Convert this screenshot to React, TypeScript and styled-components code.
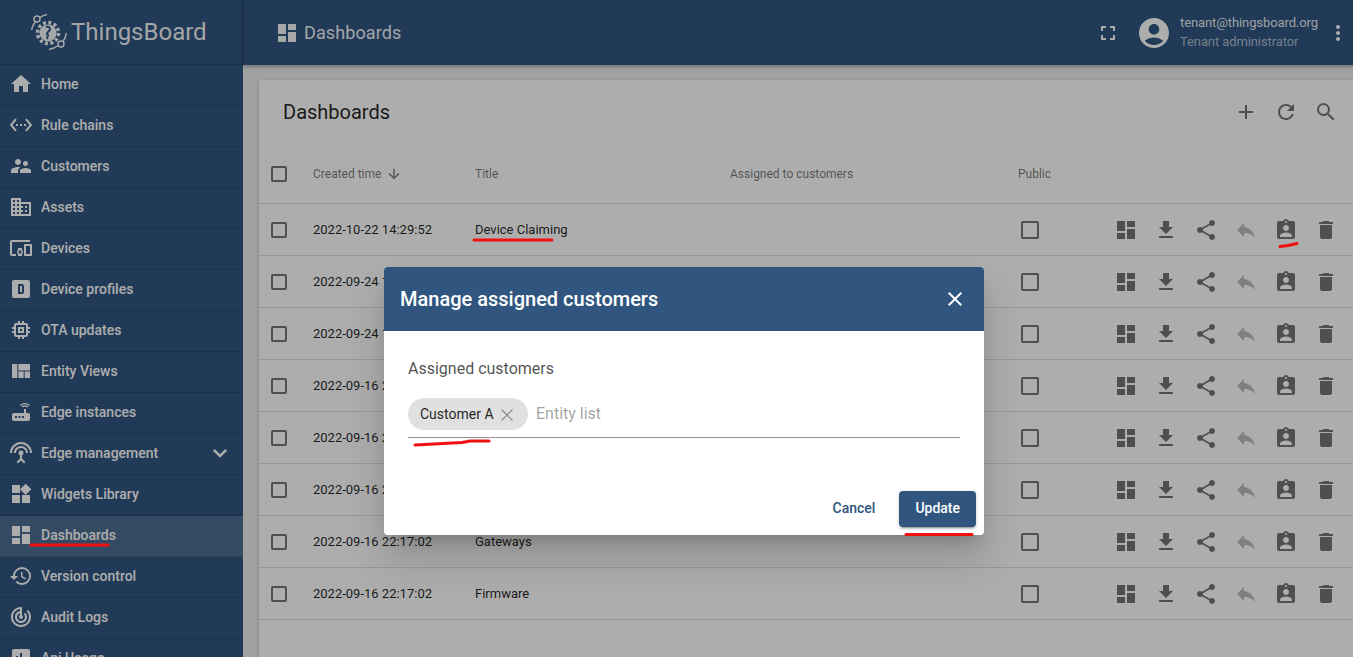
import React from "react";
import styled, { createGlobalStyle } from "styled-components";
import {
  MdAccountCircle,
  MdAdd,
  MdArrowDownward,
  MdAssignmentInd,
  MdClose,
  MdDashboard,
  MdDelete,
  MdDevicesOther,
  MdDomain,
  MdExpandMore,
  MdFileDownload,
  MdFullscreen,
  MdHistory,
  MdHome,
  MdInsertChart,
  MdMemory,
  MdMoreVert,
  MdRefresh,
  MdReply,
  MdRouter,
  MdSearch,
  MdSettingsEthernet,
  MdSettingsInputAntenna,
  MdShare,
  MdSupervisorAccount,
  MdTrackChanges,
  MdViewQuilt,
  MdWidgets,
} from "react-icons/md";

const GlobalStyle = createGlobalStyle`
  html, body {
    margin: 0;
    height: 100%;
    overflow: hidden;
    font-family: Roboto, "Liberation Sans", sans-serif;
  }
  * { box-sizing: border-box; }
`;

const Page = styled.div`
  position: relative;
  width: 1368px;
  height: 657px;
  overflow: hidden;
  display: grid;
  grid-template-columns: 243px 1fr;
  background: #eeeeee;
`;

const Sidebar = styled.aside`
  background: #305680;
  color: #fff;
  overflow: hidden;
  height: 657px;
`;

const Logo = styled.div`
  height: 65px;
  padding-left: 28px;
  display: flex;
  align-items: center;
  gap: 3px;
  border-bottom: 1px solid rgba(0, 0, 0, 0.12);
  font-size: 24px;
  color: rgba(255, 255, 255, 0.95);
`;

const MenuRow = styled.div<{ $active?: boolean }>`
  height: 41px;
  flex: none;
  padding: 0 9px 2px 9px;
  display: flex;
  align-items: center;
  gap: 8px;
  font-size: 14px;
  font-weight: 500;
  border-bottom: 1px solid rgba(0, 0, 0, 0.12);
  background: ${(p) => (p.$active ? "rgba(255, 255, 255, 0.15)" : "transparent")};
  svg { flex: none; }
`;

const Chevron = styled(MdExpandMore)`
  margin-left: auto;
`;

const Main = styled.main`
  display: flex;
  flex-direction: column;
  min-width: 0;
`;

const TopBar = styled.header`
  height: 65px;
  flex: none;
  background: #305680;
  color: #fff;
  display: flex;
  align-items: center;
  padding-left: 31px;
  border-left: 1px solid rgba(0, 0, 0, 0.12);
  box-shadow: 0 2px 4px rgba(0, 0, 0, 0.3);
  position: relative;
`;

const PageName = styled.div`
  display: flex;
  align-items: center;
  gap: 5px;
  font-size: 18px;
  letter-spacing: 0.1px;
  color: rgba(255, 255, 255, 0.95);
`;

const UserArea = styled.div`
  margin-left: auto;
  display: flex;
  align-items: center;
  padding-right: 18px;
`;

const Avatar = styled(MdAccountCircle)`
  margin-left: 16px;
`;

const UserText = styled.div`
  margin: 0 8px;
  width: 138px;
  white-space: nowrap;
  font-size: 13px;
  line-height: 19px;
  letter-spacing: -0.1px;
  color: rgba(255, 255, 255, 0.9);
  padding-bottom: 1px;
`;

const UserRole = styled.div`
  color: rgba(255, 255, 255, 0.6);
`;

const Content = styled.div`
  flex: 1;
  padding: 15px 0 0 16px;
  overflow: hidden;
`;

const Card = styled.section`
  height: 100%;
  background: #fff;
  box-shadow: 0 1px 3px rgba(0, 0, 0, 0.25);
`;

const Toolbar = styled.div`
  height: 64px;
  padding: 0 22px 0 24px;
  display: flex;
  align-items: center;
  justify-content: space-between;
  font-size: 20px;
  color: rgba(0, 0, 0, 0.87);
`;

const IconGroup = styled.div`
  display: flex;
`;

const IconButton = styled.span<{ $disabled?: boolean }>`
  width: 40px;
  height: 40px;
  display: flex;
  align-items: center;
  justify-content: center;
  color: ${(p) => (p.$disabled ? "rgba(0, 0, 0, 0.26)" : "rgba(0, 0, 0, 0.54)")};
`;

const Row = styled.div<{ $head?: boolean }>`
  height: ${(p) => (p.$head ? "60px" : "52px")};
  display: grid;
  grid-template-columns: 54px 162px 255px 288px 1fr;
  align-items: center;
  border-bottom: 1px solid rgba(0, 0, 0, 0.12);
  font-size: ${(p) => (p.$head ? "12px" : "13px")};
  color: ${(p) => (p.$head ? "rgba(0, 0, 0, 0.54)" : "rgba(0, 0, 0, 0.87)")};
`;

const CheckCell = styled.div`
  padding-left: 12px;
`;

const Checkbox = styled.div<{ $size?: number }>`
  width: ${(p) => p.$size ?? 16}px;
  height: ${(p) => p.$size ?? 16}px;
  border: 2px solid rgba(0, 0, 0, 0.54);
  border-radius: 2px;
`;

const PublicCell = styled.div`
  display: flex;
  align-items: center;
  justify-content: space-between;
  padding: 0 22px 0 3px;
`;

const SortCell = styled.div`
  display: flex;
  align-items: center;
  gap: 5px;
`;

const Overlay = styled.div`
  position: absolute;
  inset: 0;
  background: rgba(0, 0, 0, 0.32);
  display: flex;
  justify-content: center;
  align-items: flex-start;
  padding-top: 267px;
`;

const Dialog = styled.div`
  width: 600px;
  height: 268px;
  background: #fff;
  border-radius: 4px;
  overflow: hidden;
  display: flex;
  flex-direction: column;
  box-shadow: 0 11px 15px -7px rgba(0, 0, 0, 0.2), 0 24px 38px 3px rgba(0, 0, 0, 0.14);
`;

const DialogHead = styled.div`
  height: 64px;
  flex: none;
  background: #305680;
  color: #fff;
  display: flex;
  align-items: center;
  justify-content: space-between;
  padding: 0 17px 0 16px;
  font-size: 20px;
  font-weight: 500;
`;

const DialogBody = styled.div`
  flex: 1;
  padding: 28px 24px 0;
`;

const FieldLabel = styled.div`
  font-size: 16px;
  line-height: 20px;
  color: rgba(0, 0, 0, 0.7);
  margin-bottom: 19px;
`;

const ChipField = styled.div`
  height: 40px;
  display: flex;
  align-items: flex-start;
  gap: 8px;
  border-bottom: 1px solid rgba(0, 0, 0, 0.42);
`;

const Chip = styled.div`
  height: 32px;
  width: 120px;
  flex: none;
  border-radius: 16px;
  background: #e0e0e0;
  color: rgba(0, 0, 0, 0.87);
  font-size: 14px;
  display: flex;
  align-items: center;
  padding: 0 0 1px 12px;
  gap: 7px;
`;

const ChipRemove = styled.svg`
  color: rgba(0, 0, 0, 0.4);
  margin-top: 2px;
`;

const Placeholder = styled.div`
  font-size: 16px;
  line-height: 32px;
  color: rgba(0, 0, 0, 0.38);
`;

const DialogFooter = styled.div`
  flex: none;
  height: 52px;
  padding: 8px;
  display: flex;
  justify-content: flex-end;
  gap: 8px;
`;

const Button = styled.button<{ $primary?: boolean }>`
  height: 36px;
  padding: 0 16px 2px;
  border: none;
  border-radius: 4px;
  font-family: inherit;
  font-size: 14px;
  font-weight: 500;
  color: ${(p) => (p.$primary ? "#fff" : "#305680")};
  background: ${(p) => (p.$primary ? "#305680" : "transparent")};
  box-shadow: ${(p) =>
    p.$primary ? "0 3px 1px -2px rgba(0,0,0,.2), 0 2px 2px 0 rgba(0,0,0,.14), 0 1px 5px 0 rgba(0,0,0,.12)" : "none"};
`;

const Scribbles = styled.svg`
  position: absolute;
  top: 0;
  left: 0;
  pointer-events: none;
`;

const DeviceProfileIcon = () => (
  <svg width="24" height="24" viewBox="0 0 24 24" fill="currentColor">
    <path d="M9,7V17H13A2,2 0 0,0 15,15V9A2,2 0 0,0 13,7H9M11,9H13V15H11V9M5,3H19A2,2 0 0,1 21,5V19A2,2 0 0,1 19,21H5A2,2 0 0,1 3,19V5A2,2 0 0,1 5,3Z" />
  </svg>
);

const LogoMark = () => (
  <svg width="40" height="42" viewBox="0 0 40 42" fill="none" stroke="currentColor">
    <circle cx="20" cy="22" r="8.5" fill="currentColor" stroke="none" />
    <circle cx="20" cy="22" r="10.5" strokeWidth="3.5" strokeDasharray="3 2.5" />
    <path d="M18 16c4-1 5 2 3 4s-3 3-1 4l-1 4" stroke="#305680" strokeWidth="2" />
    <circle cx="9" cy="8" r="3" strokeWidth="1.5" />
    <path d="M12 6.5C14 5 16.5 4 19 3.5M7.5 10.5C5.5 13 4 16 3.5 19" strokeWidth="1.5" />
    <circle cx="33" cy="33" r="3" strokeWidth="1.5" />
    <path d="M30 34.5C27 37 24 38 21 38.5M35 30.5C37 28 38 25 38.3 22" strokeWidth="1.5" />
  </svg>
);

const menu: { label: string; icon: React.ReactNode; active?: boolean; expand?: boolean }[] = [
  { label: "Home", icon: <MdHome size={24} /> },
  { label: "Rule chains", icon: <MdSettingsEthernet size={24} /> },
  { label: "Customers", icon: <MdSupervisorAccount size={24} /> },
  { label: "Assets", icon: <MdDomain size={24} /> },
  { label: "Devices", icon: <MdDevicesOther size={24} /> },
  { label: "Device profiles", icon: <DeviceProfileIcon /> },
  { label: "OTA updates", icon: <MdMemory size={24} /> },
  { label: "Entity Views", icon: <MdViewQuilt size={24} /> },
  { label: "Edge instances", icon: <MdRouter size={24} /> },
  { label: "Edge management", icon: <MdSettingsInputAntenna size={24} />, expand: true },
  { label: "Widgets Library", icon: <MdWidgets size={24} /> },
  { label: "Dashboards", icon: <MdDashboard size={24} />, active: true },
  { label: "Version control", icon: <MdHistory size={24} /> },
  { label: "Audit Logs", icon: <MdTrackChanges size={24} /> },
  { label: "Api Usage", icon: <MdInsertChart size={24} /> },
];

const rows = [
  { time: "2022-10-22 14:29:52", title: "Device Claiming" },
  { time: "2022-09-24 17:40:11", title: "" },
  { time: "2022-09-24 17:39:48", title: "" },
  { time: "2022-09-16 22:17:02", title: "" },
  { time: "2022-09-16 22:17:02", title: "" },
  { time: "2022-09-16 22:17:02", title: "" },
  { time: "2022-09-16 22:17:02", title: "Gateways" },
  { time: "2022-09-16 22:17:02", title: "Firmware" },
];

export default function App() {
  return (
    <>
      <GlobalStyle />
      <Page>
        <Sidebar>
          <Logo>
            <LogoMark />
            ThingsBoard
          </Logo>
          {menu.map((m) => (
            <MenuRow key={m.label} $active={m.active}>
              {m.icon}
              {m.label}
              {m.expand && <Chevron size={28} />}
            </MenuRow>
          ))}
        </Sidebar>
        <Main>
          <TopBar>
            <PageName>
              <MdDashboard size={24} />
              Dashboards
            </PageName>
            <UserArea>
              <MdFullscreen size={24} />
              <Avatar size={36} />
              <UserText>
                tenant@thingsboard.org
                <UserRole>Tenant administrator</UserRole>
              </UserText>
              <MdMoreVert size={24} />
            </UserArea>
          </TopBar>
          <Content>
            <Card>
              <Toolbar>
                Dashboards
                <IconGroup>
                  <IconButton><MdAdd size={24} /></IconButton>
                  <IconButton><MdRefresh size={24} /></IconButton>
                  <IconButton><MdSearch size={24} /></IconButton>
                </IconGroup>
              </Toolbar>
              <Row $head>
                <CheckCell><Checkbox /></CheckCell>
                <SortCell>
                  Created time <MdArrowDownward size={16} />
                </SortCell>
                <div>Title</div>
                <div>Assigned to customers</div>
                <div>Public</div>
              </Row>
              {rows.map((r, i) => (
                <Row key={i}>
                  <CheckCell><Checkbox /></CheckCell>
                  <div>{r.time}</div>
                  <div>{r.title}</div>
                  <div />
                  <PublicCell>
                    <Checkbox $size={18} />
                    <IconGroup>
                      <IconButton><MdDashboard size={24} /></IconButton>
                      <IconButton><MdFileDownload size={24} /></IconButton>
                      <IconButton><MdShare size={24} /></IconButton>
                      <IconButton $disabled><MdReply size={24} /></IconButton>
                      <IconButton><MdAssignmentInd size={24} /></IconButton>
                      <IconButton><MdDelete size={24} /></IconButton>
                    </IconGroup>
                  </PublicCell>
                </Row>
              ))}
            </Card>
          </Content>
        </Main>
        <Overlay>
          <Dialog>
            <DialogHead>
              Manage assigned customers
              <MdClose size={24} />
            </DialogHead>
            <DialogBody>
              <FieldLabel>Assigned customers</FieldLabel>
              <ChipField>
                <Chip>
                  Customer A
                  <ChipRemove width="12" height="12" viewBox="0 0 12 12" stroke="currentColor" strokeWidth="1.1">
                    <path d="M.5.5l11 11M11.5.5l-11 11" />
                  </ChipRemove>
                </Chip>
                <Placeholder>Entity list</Placeholder>
              </ChipField>
            </DialogBody>
            <DialogFooter>
              <Button>Cancel</Button>
              <Button $primary>Update</Button>
            </DialogFooter>
          </Dialog>
        </Overlay>
        <Scribbles width="1368" height="657" fill="none" stroke="#f01010" strokeWidth="3" strokeLinecap="round">
          <path d="M31 545H108" />
          <path d="M474 240H552" />
          <path d="M1280 246.5L1288 245.5L1297 243.5" />
          <path d="M415 445L462 442.5L470 441H489" />
          <path d="M906 534.5H972" />
        </Scribbles>
      </Page>
    </>
  );
}
